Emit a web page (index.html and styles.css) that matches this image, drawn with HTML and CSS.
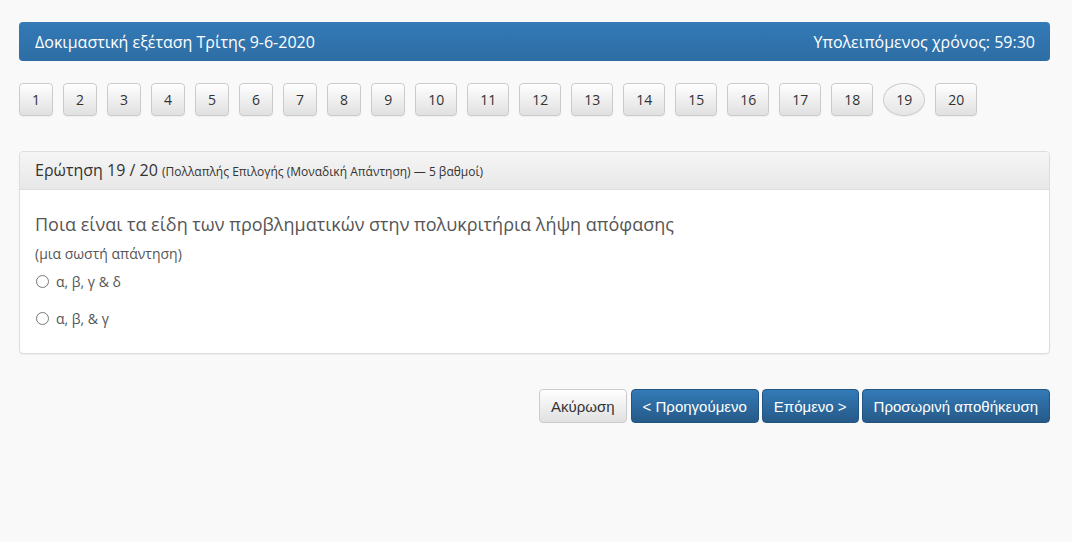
FILE: index.html
```html
<!DOCTYPE html>
<html lang="el">
<head>
  <meta charset="UTF-8">
  <meta name="viewport" content="width=device-width, initial-scale=1.0">
  <title>Δοκιμαστική εξέταση</title>
  <link rel="stylesheet" href="styles.css">
</head>
<body>
  <div class="exam">
    <div class="exam-header">
      <span class="exam-title">Δοκιμαστική εξέταση Τρίτης 9-6-2020</span>
      <span class="exam-timer">Υπολειπόμενος χρόνος: 59:30</span>
    </div>

    <div class="question-nav">
      <button class="qbtn">1</button>
      <button class="qbtn">2</button>
      <button class="qbtn">3</button>
      <button class="qbtn">4</button>
      <button class="qbtn">5</button>
      <button class="qbtn">6</button>
      <button class="qbtn">7</button>
      <button class="qbtn">8</button>
      <button class="qbtn">9</button>
      <button class="qbtn">10</button>
      <button class="qbtn">11</button>
      <button class="qbtn">12</button>
      <button class="qbtn">13</button>
      <button class="qbtn">14</button>
      <button class="qbtn">15</button>
      <button class="qbtn">16</button>
      <button class="qbtn">17</button>
      <button class="qbtn">18</button>
      <button class="qbtn current">19</button>
      <button class="qbtn">20</button>
    </div>

    <div class="question-panel">
      <div class="question-heading">
        Ερώτηση 19 / 20 <small>(Πολλαπλής Επιλογής (Μοναδική Απάντηση) — 5 βαθμοί)</small>
      </div>
      <div class="question-body">
        <div class="question-text">Ποια είναι τα είδη των προβληματικών στην πολυκριτήρια λήψη απόφασης</div>
        <div class="question-hint">(μια σωστή απάντηση)</div>
        <label class="answer"><input type="radio" name="q19"> α, β, γ &amp; δ</label>
        <label class="answer"><input type="radio" name="q19"> α, β, &amp; γ</label>
      </div>
    </div>

    <div class="actions">
      <button class="button button-default">Ακύρωση</button>
      <button class="button button-primary">&lt; Προηγούμενο</button>
      <button class="button button-primary">Επόμενο &gt;</button>
      <button class="button button-primary">Προσωρινή αποθήκευση</button>
    </div>
  </div>
</body>
</html>
```

FILE: styles.css
```css
body {
  margin: 0;
  padding: 22px 22px 0 19px;
  background-color: #f9f9f9;
  font-family: "Open Sans", Arial, sans-serif;
  color: #333;
}
.exam-header {
  display: flex;
  justify-content: space-between;
  align-items: center;
  height: 39px;
  padding: 0 15px 0 16px;
  border-radius: 4px;
  background: linear-gradient(to bottom, #337ab7 0%, #2e6da4 100%);
  color: white;
  font-size: 16px;
}
.question-nav {
  display: flex;
  gap: 10px;
  margin-top: 22px;
}
.qbtn {
  min-width: 34px;
  height: 33px;
  padding: 0 12px;
  border: 1px solid #ccc;
  border-radius: 4px;
  background: linear-gradient(to bottom, #fff 0%, #e0e0e0 100%);
  font-family: "Open Sans", Arial, sans-serif;
  font-size: 14px;
  color: #333;
  box-shadow: inset 0 1px 0 rgba(255, 255, 255, 0.15), 0 1px 1px rgba(0, 0, 0, 0.05);
  cursor: pointer;
}
.qbtn.current {
  border-radius: 50%;
  background: linear-gradient(to bottom, #fafafa 0%, #e6e6e6 100%);
}
.question-panel {
  margin-top: 35px;
  background-color: white;
  border: 1px solid #ddd;
  border-radius: 4px;
  box-shadow: 0 1px 1px rgba(0, 0, 0, 0.05);
}
.question-heading {
  height: 37px;
  line-height: 37px;
  padding: 0 15px;
  border-bottom: 1px solid #ddd;
  border-radius: 3px 3px 0 0;
  background: linear-gradient(to bottom, #f5f5f5 0%, #e8e8e8 100%);
  font-size: 16px;
  color: #333;
}
.question-heading small {
  font-size: 12px;
}
.question-body {
  padding: 18px 15px 25px;
  color: #555;
}
.question-text {
  font-size: 18px;
  line-height: 32px;
}
.question-hint {
  font-size: 14px;
  line-height: 20px;
  margin-top: 4px;
}
.answer {
  display: flex;
  align-items: center;
  gap: 7px;
  font-size: 14px;
  height: 20px;
  margin: 7px 0 0;
}
.answer + .answer {
  margin-top: 17px;
}
.answer input {
  margin: 0 0 0 1px;
  width: 13px;
  height: 13px;
}
.actions {
  display: flex;
  justify-content: flex-end;
  gap: 3px;
  margin-top: 35px;
}
.button {
  height: 34px;
  padding: 6px 11px;
  border: 1px solid transparent;
  border-radius: 4px;
  font-family: "Liberation Sans", Arial, sans-serif;
  font-size: 15px;
  cursor: pointer;
}
.button-default {
  margin-right: 1px;
  background: linear-gradient(to bottom, #fff 0%, #e0e0e0 100%);
  border-color: #ccc;
  color: #333;
}
.button-primary {
  background: linear-gradient(to bottom, #337ab7 0%, #265a88 100%);
  border-color: #245580;
  color: white;
}
```
